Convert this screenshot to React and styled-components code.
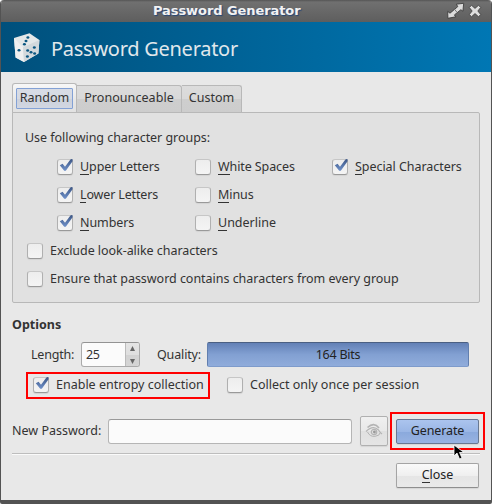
import React from "react";
import styled, { createGlobalStyle, css } from "styled-components";

const Global = createGlobalStyle`
  * { box-sizing: border-box; }
  html, body { margin: 0; padding: 0; background: #fff; }
  body { overflow: hidden; }
`;

const Window = styled.main`
  position: relative;
  display: flex;
  flex-direction: column;
  width: 492px;
  height: 504px;
  border: solid #535353;
  border-width: 0 1px 4px;
  border-radius: 4px 4px 2px 2px;
  background: #e8e8e8;
  overflow: hidden;
  color: #333;
  font: 12.5px/16px "Noto Sans", "Open Sans", sans-serif;
`;

const TitleBar = styled.header`
  display: grid;
  grid-template-columns: 1fr 20px 20px;
  align-items: center;
  height: 22px;
  padding-right: 4px;
  background: linear-gradient(#555 0, #707070 2px, #5e5e5e 100%);
  svg { display: block; }
`;

const WindowTitle = styled.h1`
  margin: 0 0 1px 152px;
  color: #f2f2f2;
  font: bold 13px/18px "DejaVu Sans", sans-serif;
  letter-spacing: -0.08px;
  text-shadow: 1px 1px 1px #234576;
  white-space: nowrap;
`;

const Banner = styled.section`
  display: flex;
  align-items: center;
  height: 50px;
  padding-left: 12px;
  background: linear-gradient(90deg, #00507c, #0077b4);
  svg { display: block; }
`;

const BannerTitle = styled.h2`
  margin: 4px 0 0 10px;
  color: #e0e8ec;
  font: 400 20px/28px "Noto Sans", sans-serif;
  letter-spacing: -0.27px;
  white-space: nowrap;
`;

const Body = styled.div`
  display: flex;
  flex-direction: column;
  padding: 11px 11px 0;
`;

const Tabs = styled.nav`
  display: flex;
  align-items: flex-end;
  height: 30px;
  margin-bottom: -1px;
`;

const Tab = styled.button`
  width: ${(p) => p.$w}px;
  height: 27px;
  margin: 0 0 1px;
  padding: 0 0 2px;
  border: 1px solid #b8b8b8;
  border-left-width: 0;
  border-bottom: 0;
  border-radius: 0 3px 0 0;
  background: linear-gradient(#dcdcdc 0, #d9d9d9 50%, #cecece 51%, #cdcdcd 100%);
  color: inherit;
  font: inherit;
  ${(p) => p.$active && css`
    height: 30px;
    margin: 0;
    padding: 0 0 1px 3px;
    border-left-width: 1px;
    border-radius: 3px 3px 0 0;
    background: linear-gradient(#f7f7f7, #e6e6e6 60%, #e1e1e1);
  `}
`;

const Focus = styled.span`
  display: block;
  width: 57px;
  height: 21px;
  border: 1px solid #83a1d5;
  border-radius: 1px;
  background: linear-gradient(#d8dce5 0, #d6dae3 50%, #ccd1dc 51%, #d2d7e2);
  line-height: 18px;
  text-align: center;
`;

const Text = styled.span`
  letter-spacing: ${(p) => p.$ls || 0}px;
  white-space: nowrap;
`;

const Mnemonic = styled.span`
  box-shadow: 0 -1px 0 #333 inset;
`;

const Panel = styled.section`
  height: 191px;
  padding: 17px 12px 0;
  border: 1px solid #b8b8b8;
  border-radius: 0 2px 2px 2px;
  background: #e1e1e1;
`;

const Groups = styled.div`
  display: grid;
  grid-template-columns: 138px 137px 1fr;
  grid-auto-rows: 28px;
  align-items: center;
  margin: 7px 0 0 32px;
`;

const CheckRow = styled.label`
  display: flex;
  align-items: center;
  gap: 7px;
  height: ${(p) => p.$h || 28}px;
  margin-left: ${(p) => p.$indent || 0}px;
`;

const Box = styled.span`
  display: block;
  flex: none;
  width: 16px;
  height: 16px;
  border: 1px solid #b0b0b0;
  border-top-color: #c6c6c6;
  border-bottom-color: #999;
  border-radius: 3px;
  background: linear-gradient(#ededed, #f4f4f4);
  box-shadow: 0 1px 1px #d3d3d3;
  svg { display: block; margin: -2px 0 0 1px; overflow: visible; }
`;

const Heading = styled.h3`
  margin: 14px 0 0;
  font-size: 12.5px;
  line-height: 16px;
`;

const Strip = styled.div`
  display: flex;
  align-items: center;
  height: 25px;
  margin-top: 9px;
`;

const Length = styled.div`
  width: 69px;
  padding-left: 19px;
`;

const Spin = styled.div`
  display: grid;
  grid-template-columns: 1fr 14px;
  width: 59px;
  height: 25px;
  border: 1px solid #aaa;
  border-top-color: #939393;
  border-radius: 3px;
  background: #fbfbfb;
  overflow: hidden;
  > span { padding: 4px 0 0 4px; line-height: 16px; }
`;

const Steps = styled.div`
  display: flex;
  flex-direction: column;
  justify-content: space-between;
  align-items: center;
  padding: 3px 0 2px;
  border-left: 1px solid #bbb;
  background: linear-gradient(#e4e4e4, #dfdfdf 50%, #d2d2d2 51%, #d5d5d5);
  svg { display: block; }
`;

const Quality = styled.div`
  width: 67px;
  padding-left: 17px;
`;

const Meter = styled.div`
  width: 262px;
  height: 25px;
  border: 1px solid #627faf;
  border-top-color: #4a5f82;
  border-bottom-color: #7e9bcb;
  border-radius: 2px;
  background: linear-gradient(#6280b6, #82a0d2 50%, #90acdb);
  color: #222;
  line-height: 24px;
  text-align: center;
`;

const EntropyRow = styled.div`
  display: flex;
  align-items: flex-start;
  gap: 17px;
  margin: 5px 0 0 14px;
`;

const Marked = styled.div`
  display: flex;
  align-items: center;
  justify-content: center;
  flex: none;
  width: ${(p) => p.$w}px;
  height: ${(p) => p.$h}px;
  border: 2px solid #f00;
  ${(p) => p.$start && css`
    align-items: flex-start;
    justify-content: flex-start;
    padding-left: 5px;
  `}
`;

const PasswordRow = styled.div`
  display: flex;
  align-items: center;
  width: 473px;
  height: 38px;
  margin-top: 13px;
`;

const PasswordLabel = styled.label`
  width: 96px;
`;

const Field = styled.input`
  width: 244px;
  height: 25px;
  margin-right: 8px;
  border: 1px solid #b5b5b5;
  border-top-color: #999;
  border-radius: 3px;
  background: #fbfbfb;
  outline: 0;
`;

const Button = styled.button`
  display: flex;
  align-items: center;
  justify-content: center;
  width: ${(p) => p.$w || 83}px;
  height: ${(p) => p.$h || 25}px;
  flex: none;
  padding: 0 0 1px;
  border: 1px solid #a4a4a4;
  border-bottom-color: #8e8e8e;
  border-radius: 2px;
  color: #222;
  font: inherit;
  background: linear-gradient(#fafafa, #efefef 50%, #e5e5e5 51%, #e9e9e9);
  box-shadow: 0 1px 1px #d5d5d5;
  ${(p) => p.$eye && css`
    margin-right: 2px;
    border-color: #b0b0b0;
    background: linear-gradient(#f0f0f0, #e8e8e8 50%, #e0e0e0 51%, #e5e5e5);
  `}
  ${(p) => p.$primary && css`
    border-color: #687892;
    background: linear-gradient(#abc4ee, #9ab6e5 50%, #8aa9dc 51%, #98b3e2);
  `}
`;

const Divider = styled.hr`
  width: 468px;
  height: 2px;
  margin: 3px 0 8px;
  border: 0;
  border-top: 1px solid #bdbdbd;
  background: #fafafa;
`;

const Footer = styled.footer`
  display: flex;
  justify-content: flex-end;
  padding-right: 1px;
`;

const Pointer = styled.svg`
  position: absolute;
  left: 452px;
  top: 444px;
`;

function Key({ children, ls }) {
  return <Text $ls={ls}><Mnemonic>{children[0]}</Mnemonic>{children.slice(1)}</Text>;
}

function Check({ text, checked, mnemonic, ls, indent, h }) {
  return (
    <CheckRow $indent={indent} $h={h}>
      <Box>
        {checked && (
          <svg width="14" height="14" viewBox="0 0 14 14">
            <defs>
              <linearGradient id="tick" x2="0" y2="1">
                <stop stopColor="#3c5685" /><stop offset="1" stopColor="#6f91c9" />
              </linearGradient>
            </defs>
            <path d="M.8 7.2 3.6 5.8 6 8.7 11.4 1.4Q12.4.8 13.6 1.2V3.2L6.8 12.7H5.2Z" fill="url(#tick)" />
          </svg>
        )}
      </Box>
      {mnemonic ? <Key ls={ls}>{text}</Key> : <Text $ls={ls}>{text}</Text>}
    </CheckRow>
  );
}

function Dice() {
  const pips = [
    [27.9, 37.6], [26, 41.1], [24.4, 44.3], [19, 50.3],
    [34.3, 47.4], [27.7, 50.4], [31, 52.2], [34.6, 53.4], [27.4, 56.6],
  ];
  return (
    <svg width="28" height="32" viewBox="13 31 28 32">
      <path d="m14 38 15.5-4.8L39.4 40l-1 13.6L24 62l-8.4-4.5Z" fill="#e4e8e9" />
      <path d="m14 38 9 9.3L24 62l-8.4-4.5Z" fill="#eff0f0" />
      <path d="M23 47.3 39.4 40l-1 13.6L24 62Z" fill="#d3d9dc" />
      <g fill="#0b5680">
        {pips.map(([x, y]) => <ellipse key={`${x}-${y}`} cx={x} cy={y} rx="1.5" ry="1.25" />)}
      </g>
    </svg>
  );
}

function Expand() {
  return (
    <svg width="18" height="18" viewBox="0 0 18 18">
      <path
        d="m9.3 2.2 7.4-.9-.8 7.9-2-1.5L7.4 12.9l1.4 1.9L.9 16.3.7 9.4l2.3 1.8L10.8 4.6Z"
        fill="#dcdcdc" stroke="#3d3d3d" strokeWidth=".9" strokeLinejoin="round"
      />
      <path d="m7.5 7.2 2.4 3" stroke="#777" strokeWidth="1" />
    </svg>
  );
}

function Close() {
  return (
    <svg width="16" height="14" viewBox="0 0 16 14">
      <path
        d="m2.3 3.5 2.2-2.2L8 4.4l3.5-3.1 2.2 2.2L10.8 7l2.9 3.5-2.2 2.2L8 9.6l-3.5 3.1-2.2-2.2L5.2 7Z"
        fill="#dedede" stroke="#3d3d3d" strokeWidth=".8" strokeLinejoin="round"
      />
    </svg>
  );
}

function Eye() {
  return (
    <svg width="18" height="18" viewBox="0 0 18 18" fill="none" stroke="#b4b4b4">
      <path d="M2.5 5.5Q9-.5 14 6" strokeWidth="1.6" />
      <path d="M1 9.5Q8 2.5 13.5 8Q15 10.5 17 12" strokeWidth="1.2" />
      <path d="M2.5 10Q5 15 10 14.3T15 11" />
      <circle cx="9" cy="10" r="2.7" strokeWidth="1.2" />
      <circle cx="9.4" cy="10" r="1.4" fill="#999" stroke="none" />
    </svg>
  );
}

export default function App() {
  return (
    <>
      <Global />
      <Window>
        <TitleBar>
          <WindowTitle>Password Generator</WindowTitle>
          <Expand />
          <Close />
        </TitleBar>
        <Banner><Dice /><BannerTitle>Password Generator</BannerTitle></Banner>
        <Body>
          <Tabs>
            <Tab $w={65} $active><Focus><Text>Random</Text></Focus></Tab>
            <Tab $w={105}><Text $ls={0.06}>Pronounceable</Text></Tab>
            <Tab $w={60}><Text>Custom</Text></Tab>
          </Tabs>
          <Panel>
            <Text $ls={-0.04}>Use following character groups:</Text>
            <Groups>
              <Check text="Upper Letters" ls={-0.08} checked mnemonic />
              <Check text="White Spaces" ls={-0.1} mnemonic />
              <Check text="Special Characters" ls={-0.05} checked mnemonic />
              <Check text="Lower Letters" ls={-0.15} checked mnemonic />
              <Check text="Minus" ls={-0.08} mnemonic />
              <span />
              <Check text="Numbers" ls={-0.08} checked mnemonic />
              <Check text="Underline" mnemonic />
            </Groups>
            <Check indent={2} ls={-0.05} text="Exclude look-alike characters" />
            <Check indent={2} ls={-0.03} text="Ensure that password contains characters from every group" />
          </Panel>
          <Heading><Text>Options</Text></Heading>
          <Strip>
            <Length><Text $ls={-0.2}>Length:</Text></Length>
            <Spin>
              <Text $ls={-0.5}>25</Text>
              <Steps>
                <svg width="7" height="5"><path d="M3.5 0 6 5H1Z" fill="#666" /></svg>
                <svg width="7" height="5"><path d="M1 0h5L3.5 5Z" fill="#666" /></svg>
              </Steps>
            </Spin>
            <Quality><Text $ls={-0.15}>Quality:</Text></Quality>
            <Meter><Text $ls={-0.25}>164 Bits</Text></Meter>
          </Strip>
          <EntropyRow>
            <Marked $w={184} $h={27} $start><Check h={22} text="Enable entropy collection" checked /></Marked>
            <Check h={26} text="Collect only once per session" />
          </EntropyRow>
          <PasswordRow>
            <PasswordLabel><Text>New Password:</Text></PasswordLabel>
            <Field aria-label="New Password" />
            <Button $eye $w={28} $h={30} aria-label="Show password"><Eye /></Button>
            <Marked $w={95} $h={38}><Button $primary><Text $ls={-0.1}>Generate</Text></Button></Marked>
          </PasswordRow>
          <Divider />
          <Footer><Button><Key>Close</Key></Button></Footer>
        </Body>
        <Pointer width="12" height="16" viewBox="0 0 12 16">
          <path d="M1 1v11l3-3 2.5 6L9 14 6.5 8.5H11Z" fill="#000" stroke="#fff" strokeWidth=".8" />
        </Pointer>
      </Window>
    </>
  );
}
